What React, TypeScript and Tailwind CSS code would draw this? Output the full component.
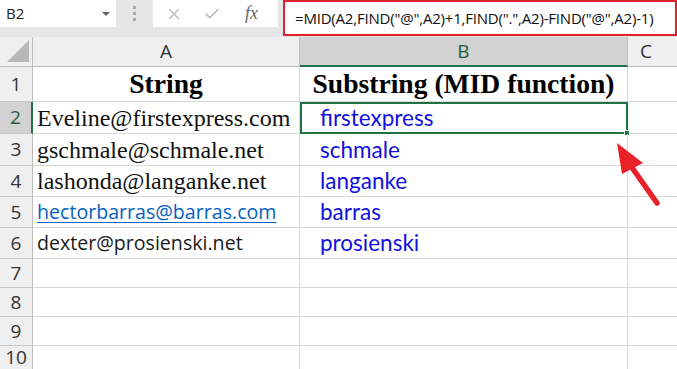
import { X, Check } from "lucide-react";

const rowHeights = [35, 32, 32, 31, 31, 31, 29, 29, 29, 24];

type Row = {
  a?: string;
  aKind?: "serif" | "link" | "sans";
  b?: string;
};

const rows: Row[] = [
  { a: "String", b: "Substring (MID function)" },
  { a: "Eveline@firstexpress.com", aKind: "serif", b: "firstexpress" },
  { a: "gschmale@schmale.net", aKind: "serif", b: "schmale" },
  { a: "lashonda@langanke.net", aKind: "serif", b: "langanke" },
  { a: "hectorbarras@barras.com", aKind: "link", b: "barras" },
  { a: "dexter@prosienski.net", aKind: "sans", b: "prosienski" },
  {},
  {},
  {},
  {},
];

const sans = "font-['Open_Sans','Liberation_Sans',sans-serif]";
const serif = "font-['Liberation_Serif','Times_New_Roman',serif]";

function ColumnCell({ row, index }: { row: Row; index: number }) {
  const aClass =
    row.aKind === "link"
      ? `${sans} text-[19.6px] text-[#0563c1] underline underline-offset-[3px] decoration-1`
      : row.aKind === "sans"
      ? `${sans} text-[19.6px] text-[#1a1a1a]`
      : `${serif} text-[24px] text-[#111]`;

  if (index === 0) {
    return (
      <>
        <div className={`flex items-center justify-center border-r border-b border-[#d8d8d8] ${serif} text-[27.6px] font-bold text-black`}>
          {row.a}
        </div>
        <div className={`flex items-center justify-center border-r border-b border-[#d8d8d8] ${serif} text-[27.6px] font-bold text-black`}>
          {row.b}
        </div>
        <div className="border-b border-[#d8d8d8]" />
      </>
    );
  }

  const selected = index === 1;
  return (
    <>
      <div className="flex items-center pl-[4px] border-r border-b border-[#d8d8d8]">
        {row.a && <span className={aClass}>{row.a}</span>}
      </div>
      <div
        className={`relative flex items-center ${
          selected ? "border-2 border-[#217346] pl-[18px]" : "border-r border-b border-[#d8d8d8] pl-[20px]"
        } font-['Lato','Noto_Sans',sans-serif] text-[22.5px] text-[#1010e0]`}
      >
        {row.b}
        {selected && (
          <div className="absolute -right-[4px] -bottom-[4px] h-[6px] w-[6px] bg-[#217346] border border-white" />
        )}
      </div>
      <div className="border-b border-[#d8d8d8]" />
    </>
  );
}

export default function App() {
  return (
    <div className="relative h-[369px] w-[677px] overflow-hidden bg-white">
      {/* Formula bar */}
      <div className="flex h-[37px] bg-[#e6e6e6]">
        <div className="flex h-[27px] w-[116px] items-center justify-between bg-white pl-[6px] pr-[6px]">
          <span className={`${sans} text-[15px] text-[#222]`}>B2</span>
          <span className="mt-[1px] border-x-[4px] border-t-[4px] border-x-transparent border-t-[#666]" />
        </div>
        <div className="flex w-[37px] flex-col items-center justify-center gap-[3px] pb-[10px]">
          <span className="h-[3px] w-[3px] bg-[#aaa]" />
          <span className="h-[3px] w-[3px] bg-[#aaa]" />
          <span className="h-[3px] w-[3px] bg-[#aaa]" />
        </div>
        <div className="flex h-[27px] w-[125px] items-center bg-white">
          <X className="ml-[12px] h-[18px] w-[18px] text-[#b5b5b5]" strokeWidth={1.5} />
          <Check className="ml-[20px] h-[18px] w-[18px] text-[#b5b5b5]" strokeWidth={2} />
          <span className={`ml-[24px] ${serif} text-[18px] italic text-[#666]`}>fx</span>
        </div>
        <div className="ml-[5px] flex h-[36px] flex-1 items-center border-2 border-[#e02230] bg-white pl-[10px]">
          <span className={`${sans} text-[15px] tracking-[-0.2px] text-[#111]`}>
            =MID(A2,FIND("@",A2)+1,FIND(".",A2)-FIND("@",A2)-1)
          </span>
        </div>
      </div>

      {/* Sheet grid */}
      <div
        className="grid grid-cols-[33px_267px_328px_1fr]"
        style={{ gridTemplateRows: `30px ${rowHeights.map((h) => `${h}px`).join(" ")}` }}
      >
        <div className="relative border-r border-b border-[#bdbdbd] bg-[#efefef]">
          <svg className="absolute bottom-[4px] right-[3px]" width="22" height="22" viewBox="0 0 22 22">
            <polygon points="22,0 22,22 0,22" fill="#b8b8b8" />
          </svg>
        </div>
        <div className={`flex items-center justify-center border-r border-b border-[#bdbdbd] bg-[#efefef] ${sans} text-[19px] text-[#333]`}>A</div>
        <div className={`flex items-center justify-center border-r border-b-2 border-r-[#bdbdbd] border-b-[#217346] bg-[#d2d2d2] ${sans} text-[19px] text-[#1e5c38]`}>B</div>
        <div className={`flex items-center border-b border-[#bdbdbd] bg-[#efefef] pl-[12px] ${sans} text-[19px] text-[#333]`}>C</div>

        {rows.map((row, i) => (
          <div key={i} className="contents">
            <div
              className={`flex items-center justify-center border-b border-r ${
                i === 1 ? "bg-[#d2d2d2] border-r-2 border-r-[#217346] text-[#1e5c38]" : "bg-[#efefef] border-r-[#bdbdbd] text-[#333]"
              } border-b-[#c8c8c8] ${sans} text-[19px]`}
            >
              {i + 1}
            </div>
            <ColumnCell row={row} index={i} />
          </div>
        ))}
      </div>

      {/* Red arrow */}
      <svg className="absolute left-0 top-0" width="677" height="369" viewBox="0 0 677 369">
        <line x1="657" y1="203" x2="628" y2="162" stroke="#e8202a" strokeWidth="5.5" strokeLinecap="round" />
        <polygon points="617,143 643,163 622,174" fill="#e8202a" />
      </svg>
    </div>
  );
}
